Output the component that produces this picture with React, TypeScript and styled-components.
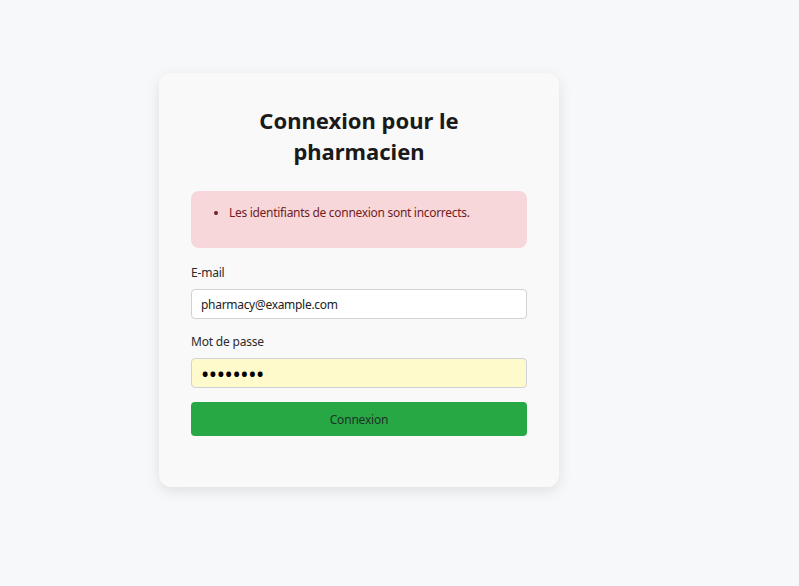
import React from 'react';
import styled, { createGlobalStyle } from 'styled-components';

const GlobalStyle = createGlobalStyle`
  html, body {
    margin: 0;
    padding: 0;
    background: #f7f8fa;
    font-family: "Noto Sans", "Open Sans", sans-serif;
    color: #212529;
  }
`;

const Page = styled.main`
  min-height: 586px;
  padding: 73px 0 0 159px;
  box-sizing: border-box;
`;

const Card = styled.section`
  width: 400px;
  height: 414px;
  box-sizing: border-box;
  padding: 32px;
  background: #f9f9f9;
  border-radius: 12px;
  box-shadow: 0 4px 14px rgba(0, 0, 0, 0.1);
`;

const Title = styled.h1`
  margin: 0 auto 24px;
  width: 240px;
  text-align: center;
  font-size: 22px;
  line-height: 31px;
  font-weight: 700;
  color: #1a1a1a;
`;

const Alert = styled.div`
  background: #f8d7da;
  color: #721c24;
  border-radius: 8px;
  padding: 12px 16px 25px;
  margin-bottom: 16px;
  font-size: 12px;
  letter-spacing: -0.3px;
  line-height: 20px;

  ul {
    margin: 0;
    padding-left: 22px;
  }
`;

const Field = styled.div`
  display: flex;
  flex-direction: column;
  gap: 8px;
  margin-bottom: 14px;
`;

const Label = styled.label`
  font-size: 12px;
  letter-spacing: -0.2px;
  line-height: 17px;
  color: #2b2b2b;
`;

const Input = styled.input<{ $autofill?: boolean }>`
  height: 30px;
  box-sizing: border-box;
  padding: 0 9px;
  border: 1px solid #cfd2d6;
  border-radius: 4px;
  background: ${(p) => (p.$autofill ? '#fffacb' : '#ffffff')};
  font-family: inherit;
  font-size: 12px;
  letter-spacing: -0.3px;
  color: #222;
  outline: none;

  &[type='password'] {
    font-size: 22px;
    letter-spacing: -0.4px;
    color: #000;
  }
`;

const Submit = styled.button`
  width: 100%;
  height: 34px;
  border: none;
  border-radius: 4px;
  background: #28a745;
  color: #1e3324;
  font-family: inherit;
  font-size: 12px;
  letter-spacing: -0.2px;
  cursor: pointer;
`;

export default function App() {
  return (
    <>
      <GlobalStyle />
      <Page>
        <Card>
          <Title>Connexion pour le pharmacien</Title>
          <Alert>
            <ul>
              <li>Les identifiants de connexion sont incorrects.</li>
            </ul>
          </Alert>
          <form onSubmit={(e) => e.preventDefault()}>
            <Field>
              <Label htmlFor="email">E-mail</Label>
              <Input id="email" type="email" defaultValue="pharmacy@example.com" />
            </Field>
            <Field>
              <Label htmlFor="password">Mot de passe</Label>
              <Input id="password" type="password" defaultValue="password" $autofill />
            </Field>
            <Submit type="submit">Connexion</Submit>
          </form>
        </Card>
      </Page>
    </>
  );
}
